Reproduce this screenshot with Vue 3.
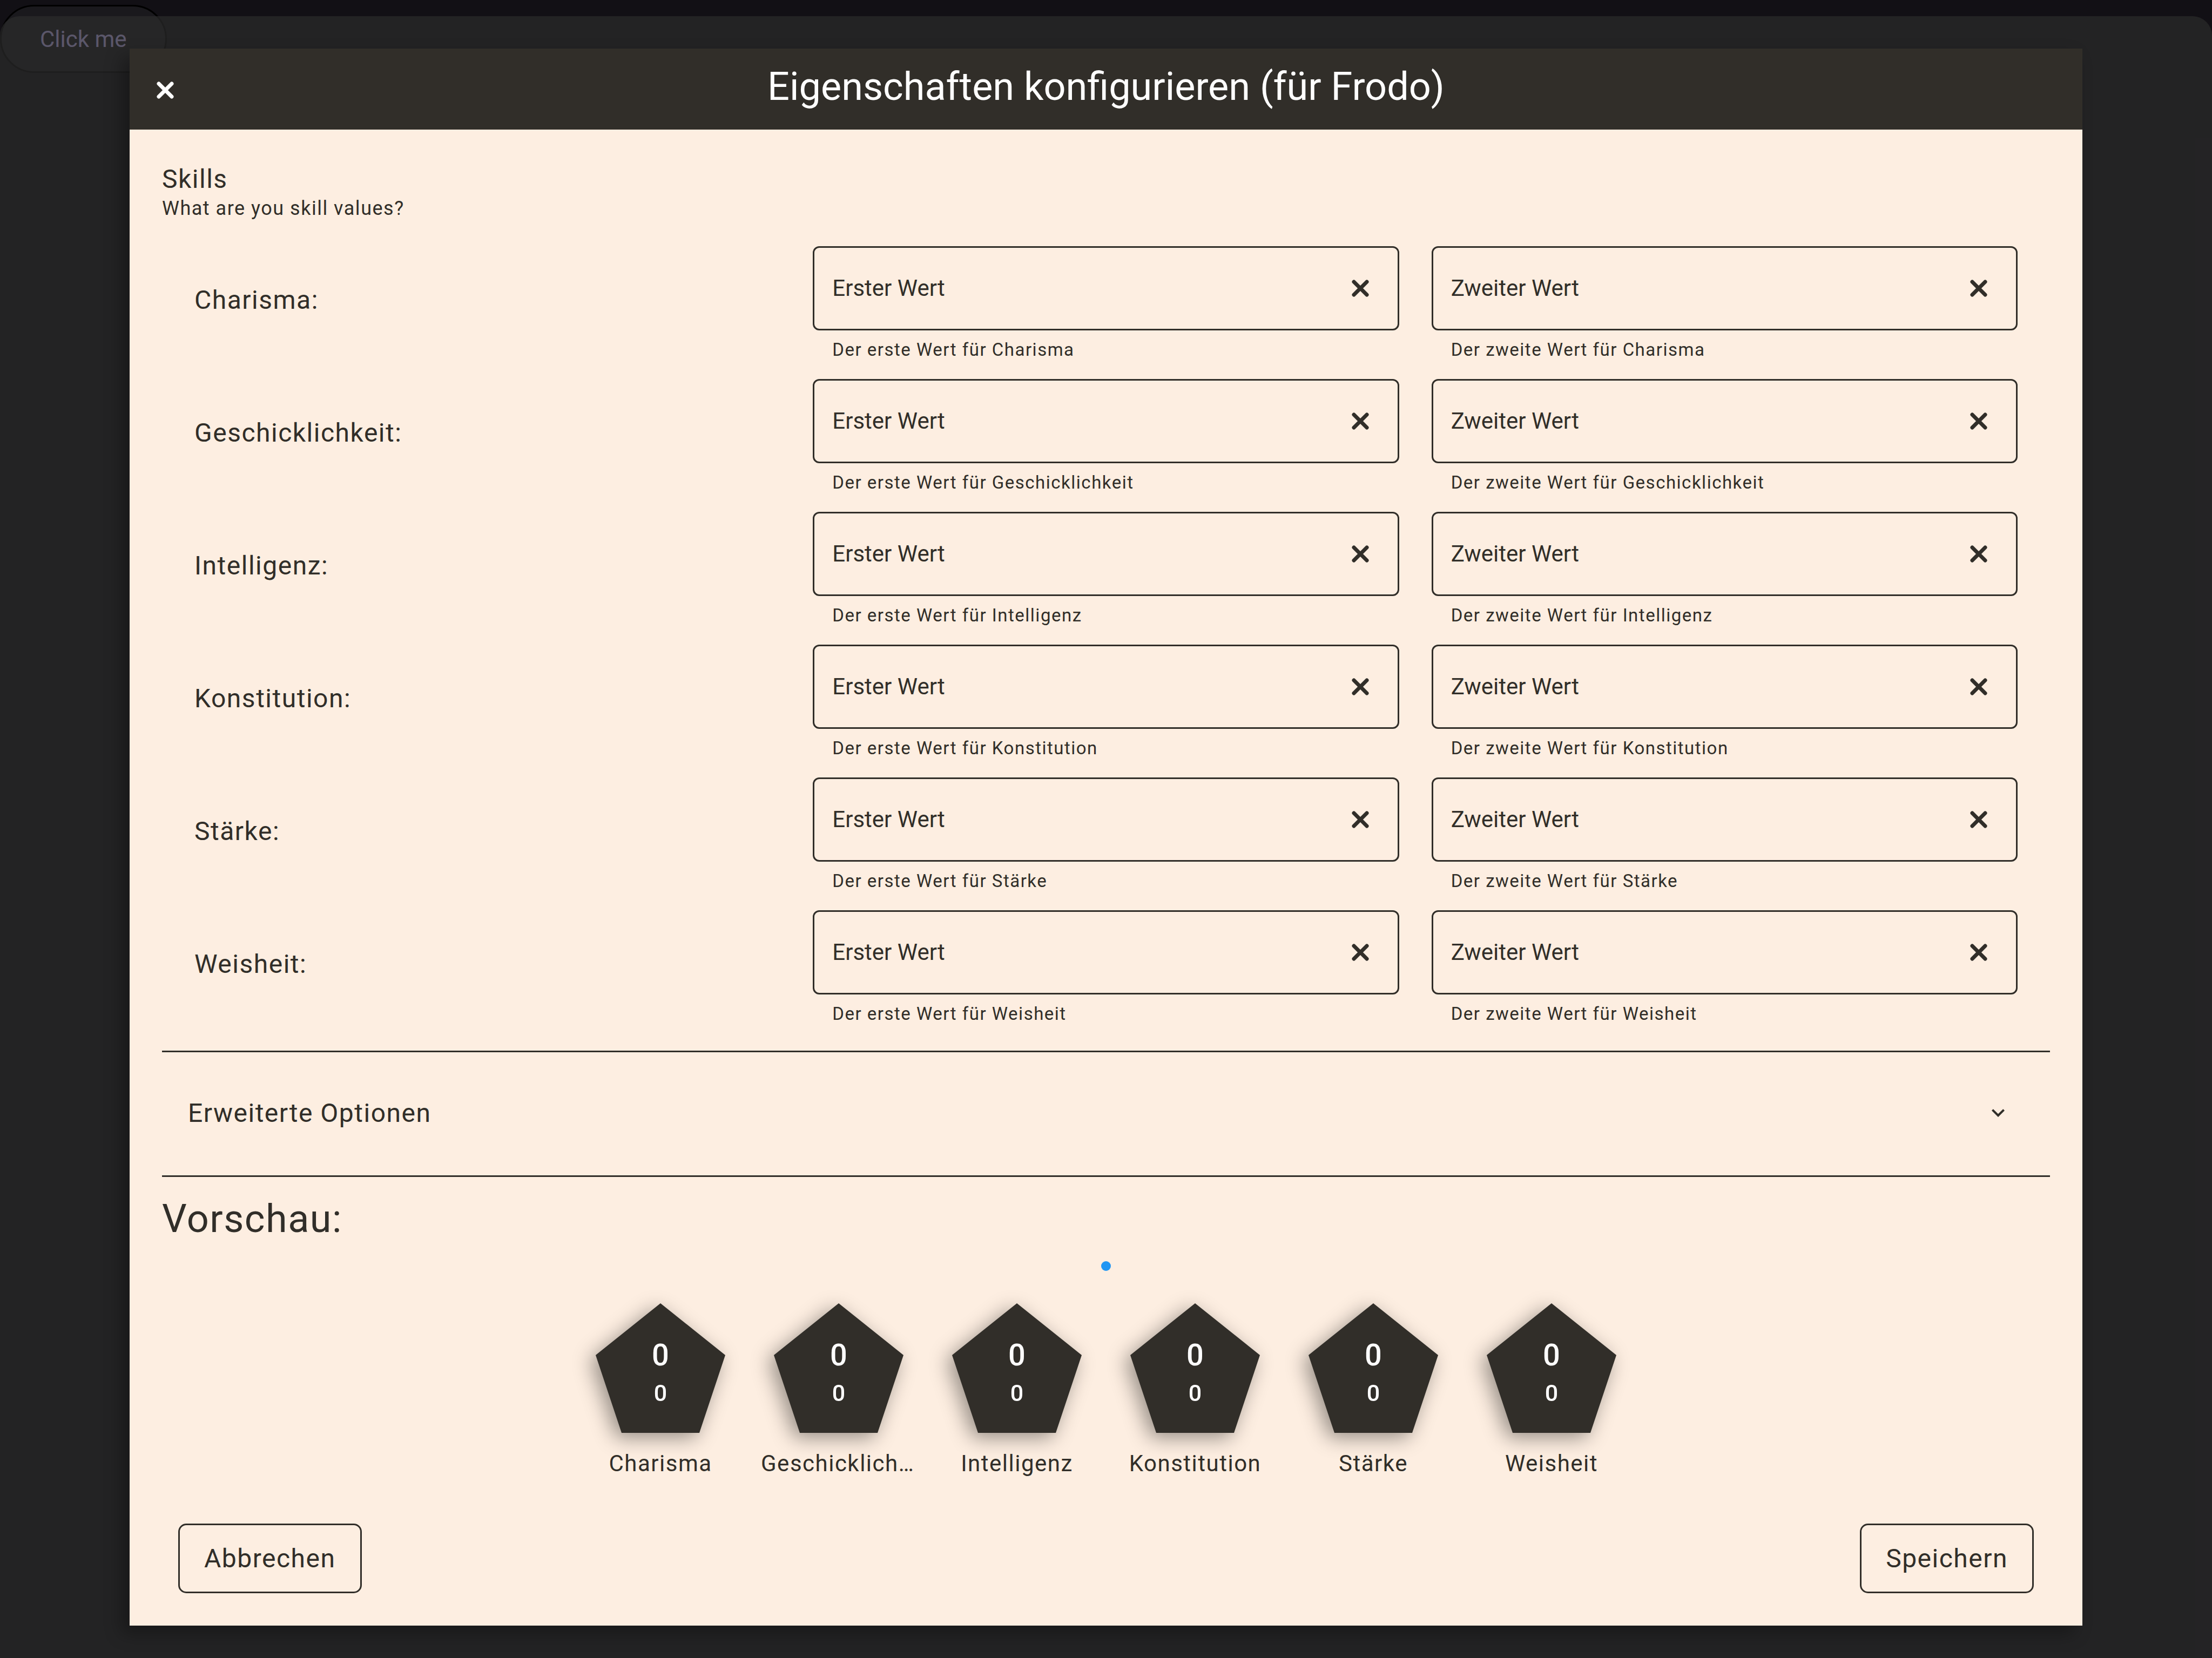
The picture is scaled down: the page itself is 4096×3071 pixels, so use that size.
<script setup>
import { ref } from 'vue'

const skills = ref([
  { id: 'charisma', name: 'Charisma', first: '', second: '' },
  { id: 'geschicklichkeit', name: 'Geschicklichkeit', first: '', second: '' },
  { id: 'intelligenz', name: 'Intelligenz', first: '', second: '' },
  { id: 'konstitution', name: 'Konstitution', first: '', second: '' },
  { id: 'staerke', name: 'Stärke', first: '', second: '' },
  { id: 'weisheit', name: 'Weisheit', first: '', second: '' },
])

const fields = [
  { key: 'first', label: 'Erster Wert', hint: 'Der erste Wert für' },
  { key: 'second', label: 'Zweiter Wert', hint: 'Der zweite Wert für' },
]

const expanded = ref(false)
</script>

<template>
  <div class="page">
    <button class="trigger" type="button">Click me</button>

    <div class="backdrop">
      <section class="dialog" role="dialog" aria-labelledby="dialog-title">
        <header class="dialog-header">
          <button class="icon-button" type="button" aria-label="Schließen">
            <svg class="cross" viewBox="0 0 32 32" aria-hidden="true">
              <path d="M4 4L28 28M28 4L4 28" />
            </svg>
          </button>
          <h1 id="dialog-title" class="dialog-title">Eigenschaften konfigurieren (für Frodo)</h1>
        </header>

        <div class="dialog-body">
          <h2 class="section-title">Skills</h2>
          <p class="section-text">What are you skill values?</p>

          <div class="skill-list">
            <div v-for="skill in skills" :key="skill.id" class="skill-row">
              <div class="skill-name">{{ skill.name }}:</div>
              <div v-for="field in fields" :key="field.key">
                <div class="field-box">
                  <label class="field-label" :for="`${skill.id}-${field.key}`">{{ field.label }}</label>
                  <input
                    :id="`${skill.id}-${field.key}`"
                    v-model="skill[field.key]"
                    class="field-input"
                    type="text"
                    :aria-describedby="`${skill.id}-${field.key}-hint`"
                  />
                  <button
                    class="icon-button"
                    type="button"
                    aria-label="Wert löschen"
                    @click="skill[field.key] = ''"
                  >
                    <svg class="cross" viewBox="0 0 32 32" aria-hidden="true">
                      <path d="M4 4L28 28M28 4L4 28" />
                    </svg>
                  </button>
                </div>
                <p :id="`${skill.id}-${field.key}-hint`" class="field-hint">{{ field.hint }} {{ skill.name }}</p>
              </div>
            </div>
          </div>

          <button class="expander" type="button" :aria-expanded="expanded" @click="expanded = !expanded">
            <span>Erweiterte Optionen</span>
            <svg class="chevron" viewBox="0 0 24 24" aria-hidden="true">
              <path d="M16.59 8.59L12 13.17 7.41 8.59 6 10l6 6 6-6z" />
            </svg>
          </button>

          <h2 class="preview-title">Vorschau:</h2>
          <span class="page-dot"></span>
          <ul class="preview-list">
            <li v-for="skill in skills" :key="skill.id" class="preview-item">
              <div class="badge-shadow">
                <div class="badge">
                  <span class="badge-first">{{ skill.first || 0 }}</span>
                  <span class="badge-second">{{ skill.second || 0 }}</span>
                </div>
              </div>
              <div class="preview-name">{{ skill.name }}</div>
            </li>
          </ul>

          <footer class="dialog-actions">
            <button class="action" type="button">Abbrechen</button>
            <button class="action" type="button">Speichern</button>
          </footer>
        </div>
      </section>
    </div>
  </div>
</template>

<style>
body {
  margin: 0;
  background: #121015;
}
</style>

<style scoped>
.page,
.page * {
  box-sizing: border-box;
}

.page {
  position: relative;
  display: flex;
  flex-direction: column;
  min-height: 100vh;
  padding-top: 30px;
  background: #121015;
  font-family: Roboto, sans-serif;
}

h1,
h2,
p,
ul {
  margin: 0;
  padding: 0;
  font-weight: 400;
}

button {
  margin: 0;
  font-family: inherit;
  letter-spacing: inherit;
  color: inherit;
  background: none;
  border: 0;
}

/* The trigger sits beneath the backdrop and shows through it. */
.trigger {
  position: absolute;
  top: 9px;
  left: 0;
  height: 126px;
  padding: 0 71px;
  border: 3px solid #000;
  border-radius: 63px;
  background: #1a191d;
  color: #b9ade6;
  font-size: 42px;
}

.backdrop {
  position: relative;
  display: flex;
  flex: 1;
  padding: 60px 240px;
  border-radius: 36px 36px 0 0;
  background: rgba(45, 45, 45, 0.67);
}

.dialog {
  display: flex;
  flex: 1;
  flex-direction: column;
  min-width: 0;
  background: #fdeee1;
  color: #312e29;
  box-shadow: -15px 15px 30px rgba(0, 0, 0, 0.3);
  font-size: 48px;
  letter-spacing: 0.03125em;
}

.dialog-header {
  display: grid;
  grid-template-columns: 132px 1fr 132px;
  align-items: center;
  height: 150px;
  background: #312e29;
  color: #fff;
}

.dialog-title {
  padding-bottom: 8px;
  font-size: 72px;
  line-height: 96px;
  letter-spacing: normal;
  text-align: center;
}

.icon-button {
  display: flex;
  align-items: center;
  justify-content: center;
  height: 96px;
  padding: 0 32px;
}

.cross {
  width: 32px;
  height: 32px;
  fill: none;
  stroke: currentColor;
  stroke-width: 7;
  stroke-linecap: round;
}

.dialog-header .icon-button {
  padding-top: 4px;
}

.dialog-body {
  display: flex;
  flex: 1;
  flex-direction: column;
  padding: 60px;
}

.section-title {
  font-size: 48px;
  line-height: 64px;
}

.section-text {
  font-size: 36px;
  line-height: 44px;
}

.skill-list {
  display: flex;
  flex-direction: column;
  gap: 32px;
  padding: 48px 60px 46px;
}

.skill-row {
  display: grid;
  grid-template-columns: repeat(3, minmax(0, 1fr));
  gap: 60px;
}

.skill-name {
  align-self: center;
  padding-bottom: 14px;
  line-height: 64px;
}

.field-box {
  display: flex;
  align-items: center;
  height: 156px;
  padding: 0 21px 0 33px;
  border: 3px solid #312e29;
  border-radius: 12px;
}

.field-label {
  font-size: 42px;
  line-height: 64px;
  letter-spacing: normal;
}

.field-input {
  flex: 1;
  min-width: 0;
  height: 100%;
  padding: 0 16px;
  border: 0;
  outline: 0;
  background: transparent;
  color: inherit;
  font: inherit;
}

.field-hint {
  padding: 14px 36px 0;
  font-size: 33px;
  line-height: 44px;
}

.expander {
  display: flex;
  align-items: center;
  justify-content: space-between;
  height: 234px;
  padding: 0 72px 4px 48px;
  border: solid #312e29;
  border-width: 3px 0;
  font-size: 48px;
  text-align: left;
}

.chevron {
  width: 48px;
  height: 48px;
  fill: currentColor;
}

.preview-title {
  padding-top: 30px;
  font-size: 72px;
  line-height: 96px;
}

.page-dot {
  align-self: center;
  width: 18px;
  height: 18px;
  margin: 30px 0 60px;
  border-radius: 50%;
  background: #2196f3;
}

.preview-list {
  display: flex;
  justify-content: center;
  gap: 42px;
  list-style: none;
}

.preview-item {
  display: flex;
  flex-direction: column;
  align-items: center;
  gap: 32px;
  width: 288px;
}

.badge-shadow {
  filter: drop-shadow(-9px 9px 18px rgba(0, 0, 0, 0.4));
}

.badge {
  display: flex;
  flex-direction: column;
  align-items: center;
  width: 240px;
  height: 240px;
  padding-top: 56px;
  background: #312e29;
  color: #fff;
  clip-path: polygon(50% 0, 100% 40%, 80% 100%, 20% 100%, 0 40%);
  font-weight: 500;
  letter-spacing: normal;
}

.badge-first {
  font-size: 56px;
  line-height: 80px;
}

.badge-second {
  font-size: 43px;
  line-height: 60px;
}

.preview-name {
  max-width: 100%;
  overflow: hidden;
  font-size: 42px;
  line-height: 50px;
  text-overflow: ellipsis;
  white-space: nowrap;
}

.dialog-actions {
  display: flex;
  justify-content: space-between;
  margin-top: auto;
  padding: 60px 30px 0;
}

.action {
  height: 129px;
  padding: 0 45px;
  border: 3px solid #312e29;
  border-radius: 15px;
  font-size: 48px;
}
</style>
